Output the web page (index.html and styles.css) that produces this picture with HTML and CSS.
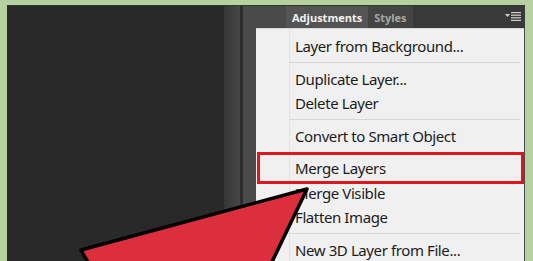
FILE: index.html
```html
<!DOCTYPE html>
<html>
<head>
<meta charset="utf-8">
<link rel="stylesheet" href="styles.css">
</head>
<body>
<div class="frame">
  <div class="canvas"></div>
  <div class="scrollbar"></div>
  <div class="divider"></div>
  <div class="panel">
    <div class="tabs">
      <div class="tab active">Adjustments</div>
      <div class="tab">Styles</div>
      <div class="tab-spacer"></div>
      <svg class="flyout" width="16" height="10" viewBox="0 0 16 10">
        <polygon points="0,3 5,3 2.5,6" fill="#d0d0d0"/>
        <rect x="6" y="1" width="10" height="1.2" fill="#d0d0d0"/>
        <rect x="6" y="3.6" width="10" height="1.2" fill="#d0d0d0"/>
        <rect x="6" y="6.2" width="10" height="1.2" fill="#d0d0d0"/>
        <rect x="6" y="8.8" width="10" height="1.2" fill="#d0d0d0"/>
      </svg>
    </div>
    <div class="menu">
      <div class="item">Layer from Background...</div>
      <div class="sep"></div>
      <div class="item">Duplicate Layer...</div>
      <div class="item">Delete Layer</div>
      <div class="sep"></div>
      <div class="item">Convert to Smart Object</div>
      <div class="sep"></div>
      <div class="item highlighted">Merge Layers</div>
      <div class="item">Merge Visible</div>
      <div class="item">Flatten Image</div>
      <div class="sep"></div>
      <div class="item">New 3D Layer from File...</div>
    </div>
  </div>
</div>
<svg class="arrow" width="533" height="261" viewBox="0 0 533 261">
  <polygon points="307,189 81,250 90,266 270,266" fill="#dc2f3d" stroke="#000" stroke-width="3.5" stroke-linejoin="round"/>
</svg>
</body>
</html>
```
FILE: styles.css
```css
html, body {
  margin: 0;
  padding: 0;
}
body {
  width: 533px;
  height: 261px;
  overflow: hidden;
  background: #b6d19f;
  position: relative;
  box-sizing: border-box;
  padding: 5px 8px 0 7px;
}
.frame {
  display: flex;
  height: 100%;
  border-top: 1px solid #34382f;
}
.canvas {
  width: 217px;
  background: #292929;
}
.scrollbar {
  width: 16px;
  background: linear-gradient(to right, #363636, #474747);
}
.divider {
  width: 3px;
  background: #2c2c2c;
}
.panel {
  flex: 1;
  display: flex;
  flex-direction: column;
  background: #4a4a4a;
}
.tabs {
  margin-left: 43px;
  height: 24px;
  background: #393939;
  display: flex;
  align-items: center;
  font-family: "Open Sans", "Noto Sans", sans-serif;
  font-size: 11px;
  font-weight: bold;
}
.tab {
  height: 100%;
  display: flex;
  align-items: center;
  padding: 0 6px;
  color: #a8a8a8;
  background: #444444;
}
.tab.active {
  background: #545454;
  color: #f2f2f2;
  padding: 0 6px 0 6px;
}
.tab-spacer {
  flex: 1;
}
.flyout {
  margin-right: 4px;
  margin-top: -2px;
}
.menu {
  margin-left: 13px;
  margin-right: 1px;
  flex: 1;
  background: #f0f0f0;
  border-top: 1px solid #d9d9d9;
  padding-top: 5px;
  font-family: "Noto Sans", "Open Sans", sans-serif;
  font-size: 15px;
  letter-spacing: -0.4px;
  color: #1b1b1b;
  background-image: linear-gradient(to right, transparent 33px, #e2e2e2 33px, #e2e2e2 34px, transparent 34px);
}
.item {
  height: 24.5px;
  line-height: 24.5px;
  padding-left: 39px;
  position: relative;
  white-space: nowrap;
}
.sep {
  height: 1px;
  margin: 3.5px 4px 3.5px 33px;
  background: #d6d6d6;
}
.highlighted::before {
  content: "";
  position: absolute;
  left: 1px;
  right: 0;
  top: -4px;
  bottom: -3px;
  border: 3px solid #e0161f;
}
.arrow {
  position: absolute;
  left: 0;
  top: 0;
}
```
